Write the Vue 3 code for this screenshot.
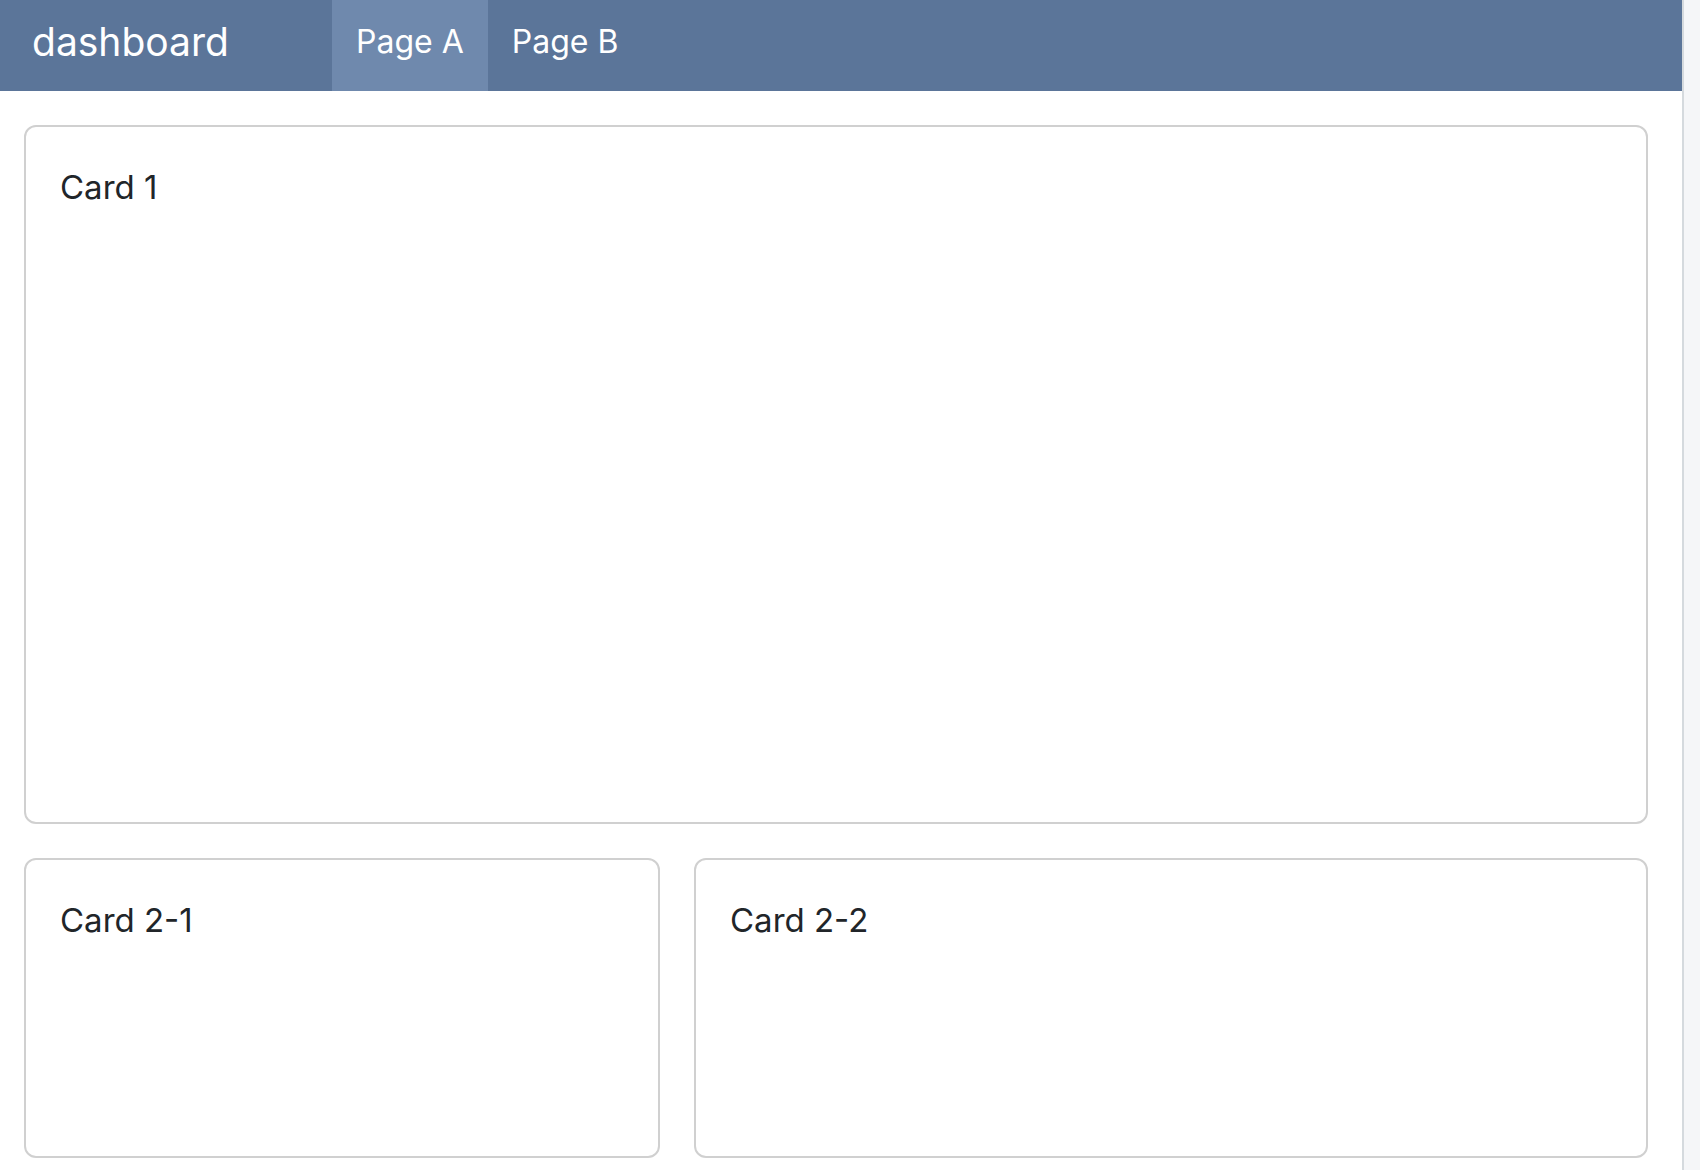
<script setup>
import { ref } from 'vue'

const pages = ['Page A', 'Page B']
const current = ref('Page A')
</script>

<template>
  <div class="app">
    <div class="content">
      <header class="navbar">
        <a class="brand" href="#">dashboard</a>
        <nav class="nav">
          <a
            v-for="page in pages"
            :key="page"
            href="#"
            class="nav-link"
            :class="{ active: page === current }"
            @click.prevent="current = page"
          >{{ page }}</a>
        </nav>
      </header>
      <main class="cards">
        <section class="card card-large">Card 1</section>
        <div class="row">
          <section class="card">Card 2-1</section>
          <section class="card">Card 2-2</section>
        </div>
      </main>
    </div>
    <aside class="gutter"></aside>
  </div>
</template>

<style>
body {
  margin: 0;
  background: #fff;
}
</style>

<style scoped>
.app {
  display: flex;
  min-height: 100vh;
  font-family: Inter, "Liberation Sans", sans-serif;
  font-size: 33px;
  line-height: 48px;
  color: #212529;
}

.content {
  flex: 1;
}

.gutter {
  box-sizing: border-box;
  width: 18px;
  border-left: 2px solid #d5dade;
  background: #f5f6f8;
}

.navbar {
  display: flex;
  height: 91px;
  background: #5b7599;
}

.brand,
.nav-link {
  box-sizing: border-box;
  padding-top: 18px;
  color: #fff;
  text-decoration: none;
}

.brand {
  width: 332px;
  padding-left: 32px;
  font-size: 39px;
}

.nav {
  display: flex;
}

.nav-link {
  padding-right: 24px;
  padding-left: 24px;
  font-size: 32px;
}

.nav-link.active {
  background: #6f89ad;
}

.cards {
  display: flex;
  flex-direction: column;
  gap: 34px;
  padding: 34px 34px 12px 24px;
}

.row {
  display: grid;
  grid-template-columns: 2fr 3fr;
  gap: 34px;
}

.card {
  box-sizing: border-box;
  min-height: 300px;
  padding: 36px 34px;
  border: 2px solid #d0d0d0;
  border-radius: 12px;
}

.card-large {
  min-height: 699px;
}
</style>
